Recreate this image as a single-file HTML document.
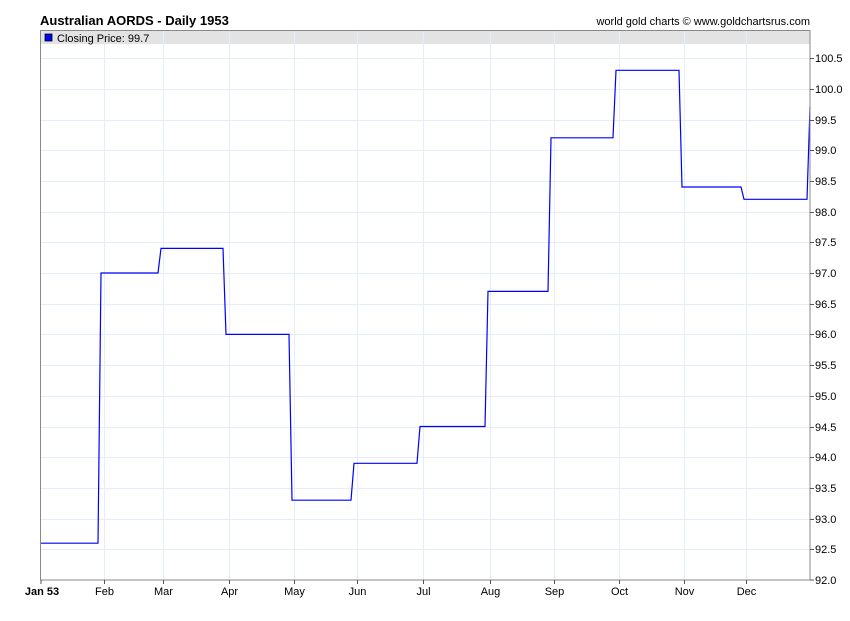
<!DOCTYPE html>
<html><head><style>
body{margin:0;background:#fff;}
svg text{font-family:"Liberation Sans",sans-serif;}
</style></head><body>
<svg width="850" height="616" xmlns="http://www.w3.org/2000/svg">
<rect width="850" height="616" fill="#fff"/>
<text x="40" y="25" font-size="13" font-weight="bold" fill="#000">Australian AORDS - Daily 1953</text>
<text x="810" y="25" font-size="11" fill="#000" text-anchor="end">world gold charts © www.goldchartsrus.com</text>
<rect x="40.5" y="31" width="769" height="13" fill="#e3e3e3"/>
<g stroke="#e4eef8" stroke-width="1">
<line x1="104.5" y1="44" x2="104.5" y2="580"/><line x1="163.5" y1="31" x2="163.5" y2="580"/>
<line x1="229.5" y1="31" x2="229.5" y2="580"/><line x1="294.5" y1="31" x2="294.5" y2="580"/>
<line x1="357.5" y1="31" x2="357.5" y2="580"/><line x1="423.5" y1="31" x2="423.5" y2="580"/>
<line x1="490.5" y1="31" x2="490.5" y2="580"/><line x1="554.5" y1="31" x2="554.5" y2="580"/>
<line x1="619.5" y1="31" x2="619.5" y2="580"/><line x1="684.5" y1="31" x2="684.5" y2="580"/>
<line x1="746.5" y1="31" x2="746.5" y2="580"/>
<line x1="40" y1="58.5" x2="810" y2="58.5"/><line x1="40" y1="89.5" x2="810" y2="89.5"/>
<line x1="40" y1="120.5" x2="810" y2="120.5"/><line x1="40" y1="150.5" x2="810" y2="150.5"/>
<line x1="40" y1="181.5" x2="810" y2="181.5"/><line x1="40" y1="212.5" x2="810" y2="212.5"/>
<line x1="40" y1="242.5" x2="810" y2="242.5"/><line x1="40" y1="273.5" x2="810" y2="273.5"/>
<line x1="40" y1="304.5" x2="810" y2="304.5"/><line x1="40" y1="334.5" x2="810" y2="334.5"/>
<line x1="40" y1="365.5" x2="810" y2="365.5"/><line x1="40" y1="396.5" x2="810" y2="396.5"/>
<line x1="40" y1="427.5" x2="810" y2="427.5"/><line x1="40" y1="457.5" x2="810" y2="457.5"/>
<line x1="40" y1="488.5" x2="810" y2="488.5"/><line x1="40" y1="519.5" x2="810" y2="519.5"/>
<line x1="40" y1="549.5" x2="810" y2="549.5"/>
</g>
<rect x="45" y="34" width="7" height="7" fill="#0000ff" stroke="#000" stroke-width="0.8"/>
<text x="57" y="42" font-size="11" fill="#000">Closing Price: 99.7</text>
<path d="M40,543.2 H98 L101,273 H158 L161,248.4 H223 L226,334.4 H289 L292,500.2 H351 L354,463.3 H417 L420,426.5 H485 L488,291.4 H548 L551,137.8 H613 L616,70.3 H679 L682,187 H741 L744,199.3 H807 L810,107" fill="none" stroke="#0000ff" stroke-width="1.2"/>
<rect x="40.5" y="30.5" width="769.5" height="549.5" fill="none" stroke="#888" stroke-width="1"/>
<g stroke="#555"><line x1="810" y1="58.5" x2="814" y2="58.5"/><line x1="810" y1="89.5" x2="814" y2="89.5"/><line x1="810" y1="120.5" x2="814" y2="120.5"/><line x1="810" y1="150.5" x2="814" y2="150.5"/><line x1="810" y1="181.5" x2="814" y2="181.5"/><line x1="810" y1="212.5" x2="814" y2="212.5"/><line x1="810" y1="242.5" x2="814" y2="242.5"/><line x1="810" y1="273.5" x2="814" y2="273.5"/><line x1="810" y1="304.5" x2="814" y2="304.5"/><line x1="810" y1="334.5" x2="814" y2="334.5"/><line x1="810" y1="365.5" x2="814" y2="365.5"/><line x1="810" y1="396.5" x2="814" y2="396.5"/><line x1="810" y1="427.5" x2="814" y2="427.5"/><line x1="810" y1="457.5" x2="814" y2="457.5"/><line x1="810" y1="488.5" x2="814" y2="488.5"/><line x1="810" y1="519.5" x2="814" y2="519.5"/><line x1="810" y1="549.5" x2="814" y2="549.5"/><line x1="810" y1="580" x2="814" y2="580"/>
<line x1="41" y1="580" x2="41" y2="584"/><line x1="104.5" y1="580" x2="104.5" y2="584"/><line x1="163.5" y1="580" x2="163.5" y2="584"/><line x1="229.5" y1="580" x2="229.5" y2="584"/><line x1="294.5" y1="580" x2="294.5" y2="584"/><line x1="357.5" y1="580" x2="357.5" y2="584"/><line x1="423.5" y1="580" x2="423.5" y2="584"/><line x1="490.5" y1="580" x2="490.5" y2="584"/><line x1="554.5" y1="580" x2="554.5" y2="584"/><line x1="619.5" y1="580" x2="619.5" y2="584"/><line x1="684.5" y1="580" x2="684.5" y2="584"/><line x1="746.5" y1="580" x2="746.5" y2="584"/></g>
<g font-size="11" fill="#000">
<text x="815" y="62">100.5</text><text x="815" y="93">100.0</text><text x="815" y="124">99.5</text><text x="815" y="154">99.0</text><text x="815" y="185">98.5</text><text x="815" y="216">98.0</text><text x="815" y="246">97.5</text><text x="815" y="277">97.0</text><text x="815" y="308">96.5</text><text x="815" y="338">96.0</text><text x="815" y="369">95.5</text><text x="815" y="400">95.0</text><text x="815" y="431">94.5</text><text x="815" y="461">94.0</text><text x="815" y="492">93.5</text><text x="815" y="523">93.0</text><text x="815" y="553">92.5</text><text x="815" y="584">92.0</text>
</g>
<g font-size="11" fill="#000" text-anchor="middle">
<text x="42" y="595" font-weight="bold">Jan 53</text><text x="104.5" y="595">Feb</text><text x="163.5" y="595">Mar</text><text x="229.5" y="595">Apr</text><text x="294.5" y="595">May</text><text x="357.5" y="595">Jun</text><text x="423.5" y="595">Jul</text><text x="490.5" y="595">Aug</text><text x="554.5" y="595">Sep</text><text x="619.5" y="595">Oct</text><text x="684.5" y="595">Nov</text><text x="746.5" y="595">Dec</text>
</g>
</svg>
</body></html>
